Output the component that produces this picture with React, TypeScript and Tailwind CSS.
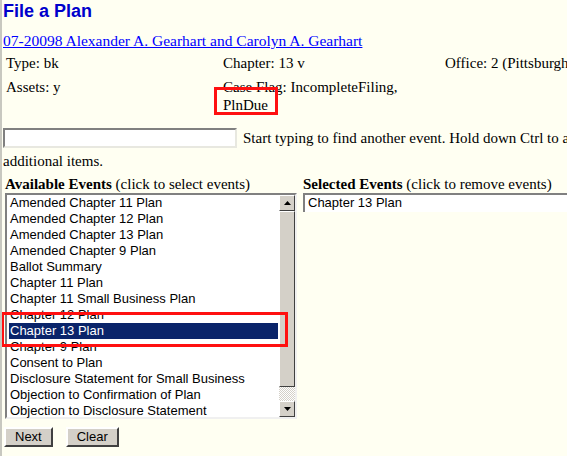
import React from "react";

const serif = { fontFamily: '"Liberation Serif", "Times New Roman", serif' };

const events = [
  "Amended Chapter 11 Plan",
  "Amended Chapter 12 Plan",
  "Amended Chapter 13 Plan",
  "Amended Chapter 9 Plan",
  "Ballot Summary",
  "Chapter 11 Plan",
  "Chapter 11 Small Business Plan",
  "Chapter 12 Plan",
  "Chapter 13 Plan",
  "Chapter 9 Plan",
  "Consent to Plan",
  "Disclosure Statement for Small Business",
  "Objection to Confirmation of Plan",
  "Objection to Disclosure Statement",
];

const Arrow = ({ up }: { up?: boolean }) => (
  <div className="w-4 h-4 bg-[#d4d0c8] border border-t-white border-l-white border-b-[#404040] border-r-[#404040] flex items-center justify-center">
    <svg width="7" height="4" viewBox="0 0 7 4">
      {up ? <path d="M3.5 0 L7 4 L0 4 Z" fill="#000" /> : <path d="M0 0 L7 0 L3.5 4 Z" fill="#000" />}
    </svg>
  </div>
);

const Button = ({ label }: { label: string }) => (
  <button className="h-5 px-[9px] bg-[#d4d0c8] border-2 border-t-white border-l-white border-b-[#404040] border-r-[#404040] text-[13px] leading-none text-black font-['Liberation_Sans',Arial,sans-serif]">
    {label}
  </button>
);

export default function App() {
  return (
    <div className="w-[567px] h-[456px] overflow-hidden bg-[#fffff2] border-l-2 border-[#c8c8c0] text-black" style={serif}>
      <h1 className="pl-[1px] pt-[1px] text-[18px] leading-[20px] font-bold text-[#0000cc] font-['Liberation_Sans',Arial,sans-serif]">
        File a Plan
      </h1>
      <a href="#" className="block mt-[11px] pl-[1px] text-[15.5px] leading-[17px] text-[#0000ff] underline whitespace-nowrap">
        07-20098 Alexander A. Gearhart and Carolyn A. Gearhart
      </a>
      <div className="grid grid-cols-[217px_222px_1fr] pl-[4px] mt-[2px] text-[15px] leading-[24px] whitespace-nowrap">
        <div>Type: bk</div>
        <div>Chapter: 13 v</div>
        <div className="overflow-hidden">Office: 2 (Pittsburgh)</div>
        <div>Assets: y</div>
        <div className="relative leading-[18px] pt-[3px]">
          Case Flag: IncompleteFiling,
          <br />
          PlnDue
          <span className="absolute left-[-9px] top-[12px] w-[64px] h-[28px] border-[3px] border-[#ff1010]" />
        </div>
        <div />
      </div>
      <div className="flex items-center mt-[13px] pl-[1px] whitespace-nowrap text-[15px] overflow-hidden">
        <input className="shrink-0 w-[234px] h-[20px] bg-white border-2 border-t-[#808080] border-l-[#808080] border-b-[#e8e8e0] border-r-[#e8e8e0]" />
        <span className="ml-[6px]">Start typing to find another event. Hold down Ctrl to add</span>
      </div>
      <div className="pl-[1px] text-[15px] leading-[18px] mt-[2px]">additional items.</div>
      <div className="flex mt-[6px] pl-[3px] gap-[6px]">
        <div className="w-[292px] shrink-0">
          <div className="text-[15px] leading-[17px] whitespace-nowrap">
            <b>Available Events</b> (click to select events)
          </div>
          <div className="relative flex h-[226px] bg-white border-2 border-t-[#808080] border-l-[#808080] border-b-[#f0f0f0] border-r-[#f0f0f0] font-['Liberation_Sans',Arial,sans-serif] text-[13px]">
            <ul className="flex-1 pl-[2px] pr-[1px]">
              {events.map((e) => (
                <li
                  key={e}
                  className={
                    e === "Chapter 13 Plan"
                      ? "h-4 leading-4 pl-[1px] bg-[#0a246a] text-white whitespace-nowrap"
                      : "h-4 leading-4 pl-[1px] whitespace-nowrap"
                  }
                >
                  {e}
                </li>
              ))}
            </ul>
            <div className="w-4 flex flex-col">
              <Arrow up />
              <div className="h-[176px] bg-[#d4d0c8] border border-t-white border-l-white border-b-[#404040] border-r-[#404040]" />
              <div className="flex-1 bg-[repeating-conic-gradient(#ffffff_0_25%,#d4d0c8_0_50%)] bg-[length:2px_2px]" />
              <Arrow />
            </div>
            <span className="absolute left-[-6px] top-[117px] w-[287px] h-[35px] border-[3px] border-[#ff1010]" />
          </div>
        </div>
        <div className="flex-1 min-w-0">
          <div className="text-[15px] leading-[17px] whitespace-nowrap">
            <b>Selected Events</b> (click to remove events)
          </div>
          <div className="h-[19px] bg-white border-t-2 border-l-2 border-[#808080] font-['Liberation_Sans',Arial,sans-serif] text-[13px] leading-4 pl-[3px] whitespace-nowrap">
            Chapter 13 Plan
          </div>
        </div>
      </div>
      <div className="flex gap-[13px] mt-[8px] pl-[2px]">
        <Button label="Next" />
        <Button label="Clear" />
      </div>
    </div>
  );
}
